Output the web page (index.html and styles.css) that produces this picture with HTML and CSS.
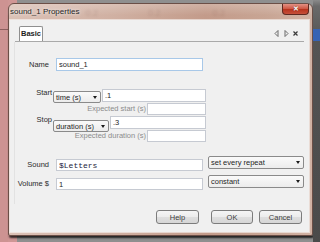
FILE: index.html
```html
<!DOCTYPE html>
<html lang="en">
<head>
    <meta charset="UTF-8">
    <meta name="viewport" content="width=device-width, initial-scale=1.0">
    <title>sound_1 Properties</title>
    <link rel="stylesheet" href="styles.css">
</head>
<body>
    <div class="desk">
        <div class="side-left"><div class="rule"></div></div>
        <div class="window">
            <div class="titlebar">
                <span class="title">sound_1 Properties</span>
                <span class="ghost g1">0.2</span>
                <span class="ghost g2">0.2</span>
                <span class="ghost g3">0.2</span>
                <div class="close">&#10005;</div>
            </div>
            <div class="client">
                <div class="notebook">
                    <div class="tabs">
                        <div class="tab">Basic</div>
                        <svg class="tab-nav" width="26" height="7" viewBox="0 0 26 7">
                            <path d="M5 0.5 L2 3.5 L5 6.5 Z" fill="none" stroke="#6a6a6a" stroke-width="1"/>
                            <path d="M12 0.5 L15 3.5 L12 6.5 Z" fill="none" stroke="#6a6a6a" stroke-width="1"/>
                            <path d="M20.5 1.5 L24.5 5.5 M24.5 1.5 L20.5 5.5" stroke="#3a3a3a" stroke-width="1.2"/>
                        </svg>
                    </div>
                    <div class="page">
                        <div class="row name-row">
                            <label class="lbl">Name</label>
                            <input class="field focus" type="text" value="sound_1">
                        </div>
                        <div class="row start-row">
                            <label class="lbl-t">Start</label>
                            <div class="choice c-start">time (s)<span class="arr"></span></div>
                            <input class="field f-start" type="text" value=".1">
                        </div>
                        <div class="row hint-row first">
                            <span class="hint">Expected start (s)</span>
                            <input class="field hint-box" type="text">
                        </div>
                        <div class="row stop-row">
                            <label class="lbl-t">Stop</label>
                            <div class="choice c-stop">duration (s)<span class="arr"></span></div>
                            <input class="field f-stop" type="text" value=".3">
                        </div>
                        <div class="row hint-row second">
                            <span class="hint">Expected duration (s)</span>
                            <input class="field hint-box" type="text">
                        </div>
                        <div class="row param-row sound">
                            <label class="lbl-p">Sound</label>
                            <input class="field mono" type="text" value="$Letters">
                            <div class="choice c-wide">set every repeat<span class="arr"></span></div>
                        </div>
                        <div class="row param-row volume">
                            <label class="lbl-p">Volume $</label>
                            <input class="field" type="text" value="1">
                            <div class="choice c-wide">constant<span class="arr"></span></div>
                        </div>
                    </div>
                </div>
                <div class="buttons">
                    <button class="btn help">Help</button>
                    <button class="btn ok">OK</button>
                    <button class="btn cancel">Cancel</button>
                </div>
            </div>
        </div>
        <div class="side-right"><div class="blue"></div></div>
    </div>
</body>
</html>
```

FILE: styles.css
```css
html, body {
    margin: 0;
    padding: 0;
}
body {
    width: 320px;
    height: 242px;
    overflow: hidden;
    font-family: "Liberation Sans", Arial, sans-serif;
    font-size: 7.5px;
    color: #2b2b2b;
}
.desk {
    display: flex;
    width: 320px;
    height: 242px;
    background: linear-gradient(90deg, #cf9695 0, #cf9695 17px, #8f8f8f 17px);
}
.side-left {
    width: 8px;
    flex-shrink: 0;
    background: #cd9392;
}
.side-left .rule {
    height: 1px;
    margin-top: 29px;
    background: #8d5f5e;
}
.side-right {
    width: 7px;
    flex-shrink: 0;
    background: linear-gradient(#8a8a8a 0, #6a6a6a 6px, #545454 40px, #4a4a4a);
}
.side-right .blue {
    height: 12px;
    margin-top: 29px;
    background: #3763b4;
}

/* window frame */
.window {
    width: 305px;
    height: 233px;
    margin-top: 3px;
    flex-shrink: 0;
    box-sizing: border-box;
    border: 1px solid #6b4f47;
    border-radius: 6px 6px 2px 2px;
    background: linear-gradient(90deg, #dbc1b6 0%, #d0b0a2 35%, #c39b8a 65%, #c8a594 85%, #d1b2a4 100%);
    box-shadow: 1px 2px 2px rgba(0, 0, 0, 0.75);
    display: flex;
    flex-direction: column;
}
.titlebar {
    height: 16px;
    display: flex;
    align-items: flex-start;
    background: linear-gradient(rgba(255, 255, 255, 0.22), rgba(255, 255, 255, 0) 70%);
    border-radius: 5px 5px 0 0;
}
.title {
    margin: 3px 0 0 1px;
    font-size: 8px;
    color: #262626;
    text-shadow: 0 0 3px rgba(255, 255, 255, 0.9), 0 0 6px rgba(255, 255, 255, 0.6);
}
.ghost {
    margin-top: 4px;
    font-size: 9px;
    color: rgba(80, 50, 40, 0.13);
    filter: blur(0.8px);
}
.g1 {
    margin-left: 6px;
}
.g2 {
    margin-left: 50px;
}
.g3 {
    margin-left: 52px;
}
.close {
    margin-left: auto;
    margin-right: 3px;
    width: 27px;
    height: 11px;
    box-sizing: border-box;
    border: 1px solid #5e2820;
    border-top: none;
    border-radius: 0 0 4px 4px;
    background: linear-gradient(#e39184, #cf5a47 45%, #b8341f 55%, #c5503b);
    color: #fff;
    font-size: 7px;
    font-weight: bold;
    line-height: 10px;
    text-align: center;
    text-shadow: 0 0 1px #5a1a12;
}
.client {
    flex: 1;
    margin: 0 3px 3px 1px;
    background: #f0f0f0;
    box-shadow: 0 0 0 1px rgba(255, 255, 255, 0.55);
    display: flex;
    flex-direction: column;
}

/* notebook */
.notebook {
    flex: 1;
    margin: 6px 5px 0 5px;
    display: flex;
    flex-direction: column;
}
.tabs {
    height: 16px;
    box-sizing: border-box;
    border-bottom: 1px solid #a9a9a9;
    display: flex;
    align-items: flex-end;
}
.tab {
    margin-left: 4px;
    width: 24px;
    height: 15px;
    box-sizing: border-box;
    border: 1px solid #8f8f8f;
    border-bottom: none;
    border-radius: 2px 2px 0 0;
    background: #fff;
    font-weight: bold;
    color: #1e1e1e;
    text-align: center;
    line-height: 14px;
}
.tab-nav {
    margin-left: auto;
    margin-right: 5px;
    align-self: center;
}
.page {
    flex: 1;
    padding-top: 16px;
    border-left: 1px solid #e2e2e2;
    margin-left: -1px;
}
.row {
    display: flex;
    align-items: flex-start;
}
.field {
    box-sizing: border-box;
    height: 13px;
    margin: 0;
    padding: 0 2px;
    border: 1px solid #c6cad2;
    background: #fff;
    font-family: "Liberation Sans", Arial, sans-serif;
    font-size: 7.5px;
    color: #1f1f1f;
    outline: none;
}
.field.focus {
    border-color: #a8c8e8;
}
.field.mono {
    font-family: "Liberation Mono", "Courier New", monospace;
    font-size: 8px;
    color: #1a1a3a;
}
.choice {
    box-sizing: border-box;
    height: 12px;
    padding-left: 2px;
    border: 1px solid #8a8a8a;
    border-radius: 2px;
    background: linear-gradient(#fafafa, #ececec);
    display: flex;
    align-items: center;
    color: #1f1f1f;
    white-space: nowrap;
}
.arr {
    margin-left: auto;
    margin-right: 3px;
    width: 0;
    height: 0;
    border-left: 2.5px solid transparent;
    border-right: 2.5px solid transparent;
    border-top: 3px solid #1a1a1a;
}

.name-row {
    height: 13px;
}
.lbl {
    width: 35px;
    padding-right: 1px;
    box-sizing: border-box;
    text-align: right;
    line-height: 13px;
}
.name-row .field {
    margin-left: 6px;
    width: 147px;
}

.lbl-t {
    width: 38px;
    padding-right: 1px;
    box-sizing: border-box;
    text-align: right;
    line-height: 10px;
    margin-top: -1px;
}
.start-row {
    margin-top: 18px;
    height: 13px;
}
.c-start {
    width: 48px;
    margin-top: 2px;
}
.f-start {
    margin-left: 1px;
    width: 104px;
}
.stop-row {
    margin-top: 1px;
    height: 12px;
}
.c-stop {
    width: 56px;
    margin-top: 4px;
}
.f-stop {
    margin-left: 1px;
    width: 96px;
}
.hint-row {
    height: 12px;
}
.hint-row.first {
    margin-top: 1px;
}
.hint-row.second {
    margin-top: 2px;
}
.hint {
    width: 132px;
    padding-right: 1px;
    box-sizing: border-box;
    text-align: right;
    color: #8c8c8c;
    line-height: 12px;
}
.hint-box {
    width: 59px;
    height: 12px;
}

.param-row {
    height: 15px;
}
.param-row.sound {
    margin-top: 14px;
}
.param-row.volume {
    margin-top: 4px;
}
.lbl-p {
    width: 34px;
    text-align: right;
    line-height: 10px;
    margin-top: 4px;
    white-space: nowrap;
}
.param-row .field {
    margin: 3px 0 0 7px;
    width: 147px;
    height: 12px;
}
.c-wide {
    width: 96px;
    height: 13px;
    margin-left: 5px;
}

/* dialog buttons */
.buttons {
    display: flex;
    justify-content: flex-end;
    padding-right: 7px;
    margin: 6px 0 8px;
}
.btn {
    height: 14px;
    margin: 0;
    padding: 0;
    box-sizing: border-box;
    border: 1px solid #7c7c7c;
    border-radius: 3px;
    background: linear-gradient(#f5f5f5, #ececec 48%, #dedede 52%, #d6d6d6);
    font-family: "Liberation Sans", Arial, sans-serif;
    font-size: 7.5px;
    color: #404040;
}
.help {
    width: 43px;
}
.ok {
    width: 42px;
    margin-left: 12px;
}
.cancel {
    width: 43px;
    margin-left: 6px;
}
```
